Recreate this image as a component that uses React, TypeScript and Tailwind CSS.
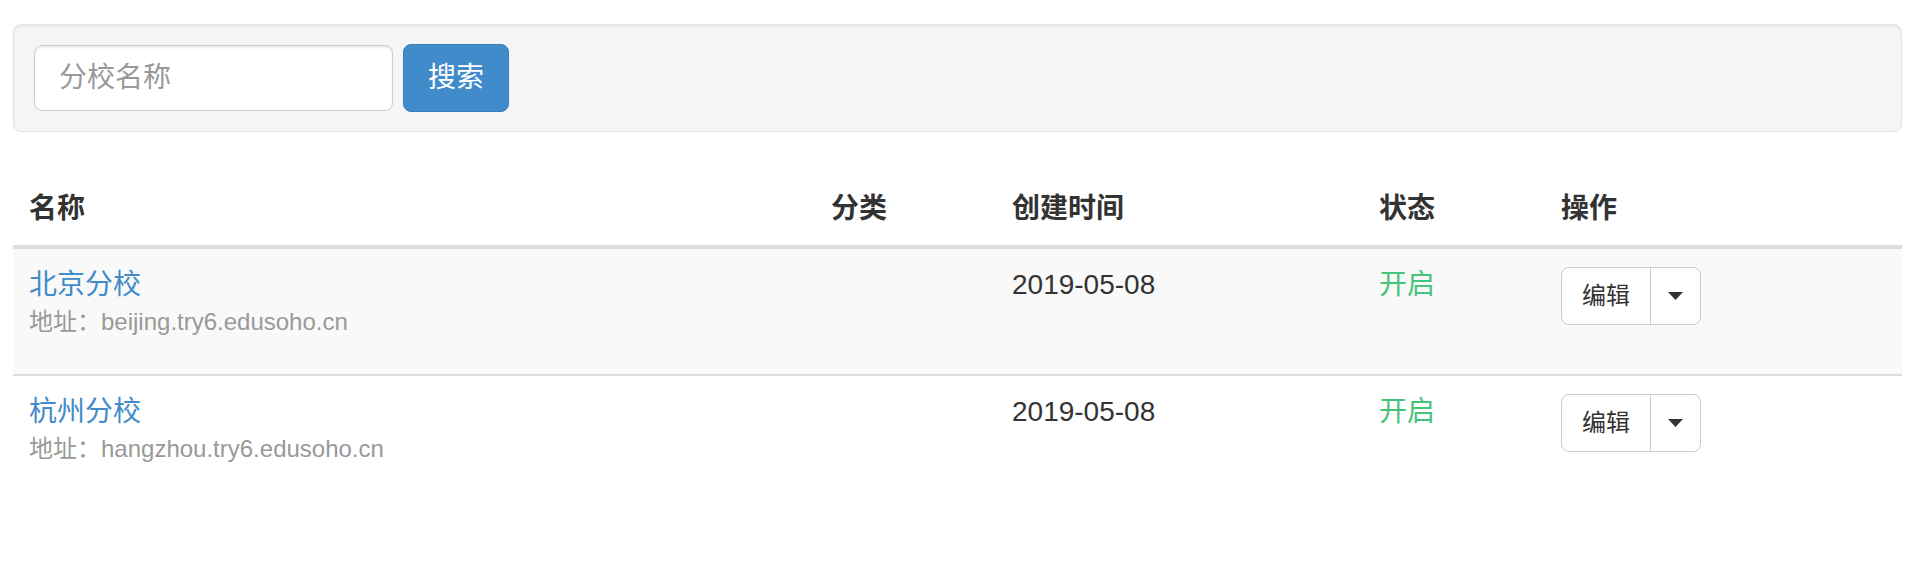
const schools = [
  { name: "北京分校", host: "beijing.try6.edusoho.cn", createdAt: "2019-05-08", status: "开启" },
  { name: "杭州分校", host: "hangzhou.try6.edusoho.cn", createdAt: "2019-05-08", status: "开启" },
];

const headers = [
  { label: "名称", width: "w-[802px]" },
  { label: "分类", width: "w-[181px]" },
  { label: "创建时间", width: "w-[367px]" },
  { label: "状态", width: "w-[182px]" },
  { label: "操作", width: "" },
];

export default function App() {
  return (
    <div className="min-h-[586px] bg-white pl-[13px] pr-[12px] pt-[24px] font-['Liberation_Sans','Noto_Sans_CJK_SC',sans-serif] text-[28px] text-[#333]">
      {/* ── Search well ── */}
      <div className="flex items-center gap-[10px] rounded-[8px] border border-[#e3e3e3] bg-[#f5f5f5] px-[20px] py-[19px] shadow-[inset_0_2px_2px_rgba(0,0,0,0.05)]">
        <input
          type="text"
          placeholder="分校名称"
          className="h-[66px] w-[359px] rounded-[8px] border border-[#ccc] bg-white px-[24px] text-[28px] text-[#555] outline-none placeholder:text-[#999] shadow-[inset_0_2px_2px_rgba(0,0,0,0.075)]"
        />
        <button className="h-[68px] rounded-[8px] border border-[#357ebd] bg-[#428bca] px-[24px] text-[28px] leading-none text-white">
          搜索
        </button>
      </div>

      {/* ── Table ── */}
      <table className="mt-[41px] w-full table-fixed border-separate border-spacing-0">
        <thead>
          <tr>
            {headers.map((h) => (
              <th
                key={h.label}
                className={`${h.width} border-b-[4px] border-[#ddd] px-[16px] py-[16px] text-left font-bold leading-[40px]`}
              >
                {h.label}
              </th>
            ))}
          </tr>
        </thead>
        <tbody>
          {schools.map((s, i) => {
            const cell =
              i === 0
                ? "h-[125px] bg-[#f9f9f9] px-[16px] pt-[16px] align-top"
                : "h-[125px] border-t-[2px] border-[#ddd] bg-white px-[16px] pt-[16px] align-top";
            return (
              <tr key={s.name}>
                <td className={cell}>
                  <a href="#" className="block leading-[40px] text-[#428bca]">
                    {s.name}
                  </a>
                  <div className="text-[24px] leading-[34px] text-[#999]">地址：{s.host}</div>
                </td>
                <td className={cell} />
                <td className={`${cell} leading-[40px]`}>{s.createdAt}</td>
                <td className={`${cell} leading-[40px] text-[#46c37b]`}>{s.status}</td>
                <td className={cell}>
                  <div className="mt-[2px] inline-flex">
                    <button className="h-[58px] rounded-l-[8px] border border-[#ccc] bg-white px-[20px] text-[24px] leading-none text-[#333]">
                      编辑
                    </button>
                    <button className="-ml-px flex h-[58px] w-[51px] items-center justify-center rounded-r-[8px] border border-[#ccc] bg-white">
                      <svg width="15" height="8" viewBox="0 0 15 8">
                        <polygon points="0,0 15,0 7.5,8" fill="#333" />
                      </svg>
                    </button>
                  </div>
                </td>
              </tr>
            );
          })}
        </tbody>
      </table>
    </div>
  );
}
